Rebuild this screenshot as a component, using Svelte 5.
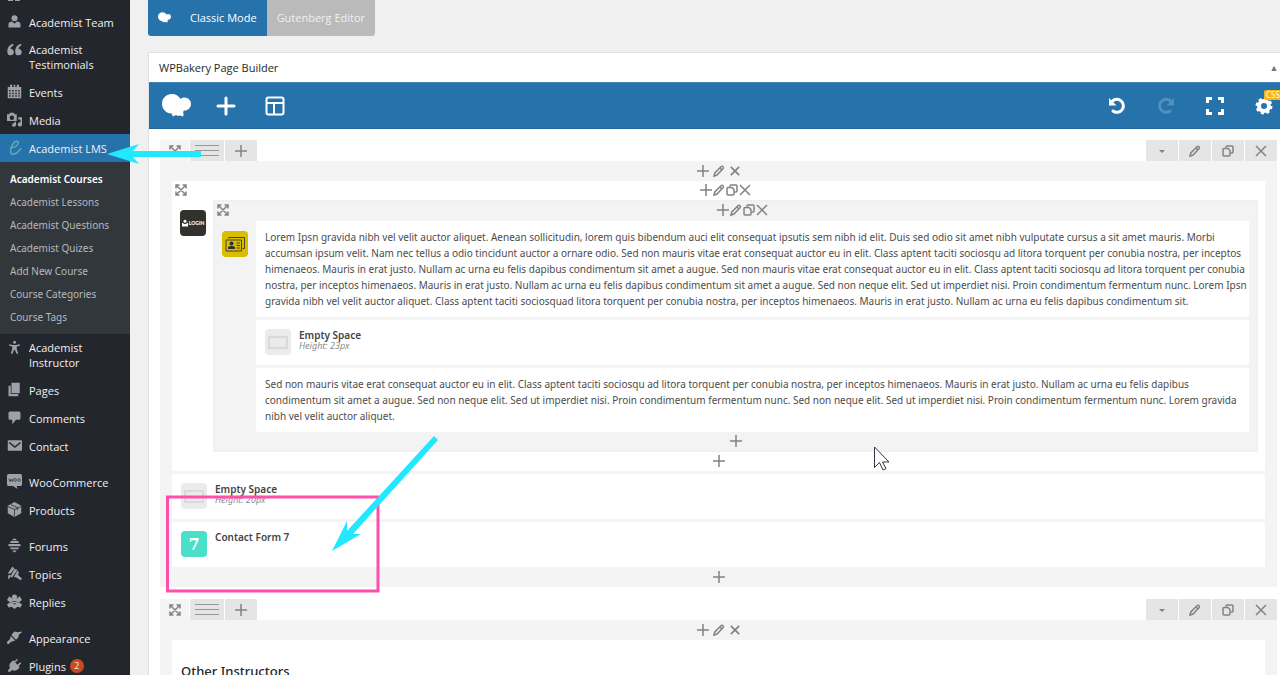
<script lang="ts">
	type Item = { label: string; icon: string; gap?: boolean; current?: boolean; count?: number };

	const before: Item[] = [
		{ label: 'Academist Team', icon: 'user' },
		{ label: 'Academist Testimonials', icon: 'quote' },
		{ label: 'Events', icon: 'calendar' },
		{ label: 'Media', icon: 'media' },
		{ label: 'Academist LMS', icon: 'lms', current: true }
	];

	const submenu = [
		'Academist Courses',
		'Academist Lessons',
		'Academist Questions',
		'Academist Quizes',
		'Add New Course',
		'Course Categories',
		'Course Tags'
	];

	const after: Item[] = [
		{ label: 'Academist Instructor', icon: 'person' },
		{ label: 'Pages', icon: 'pages' },
		{ label: 'Comments', icon: 'comment' },
		{ label: 'Contact', icon: 'mail' },
		{ label: 'WooCommerce', icon: 'woo', gap: true },
		{ label: 'Products', icon: 'box' },
		{ label: 'Forums', icon: 'hive', gap: true },
		{ label: 'Topics', icon: 'topics' },
		{ label: 'Replies', icon: 'bee' },
		{ label: 'Appearance', icon: 'brush', gap: true },
		{ label: 'Plugins', icon: 'plug', count: 2 }
	];

	const intro = [
		'Lorem Ipsn gravida nibh vel velit auctor aliquet. Aenean sollicitudin, lorem quis bibendum auci elit consequat ipsutis sem nibh id elit. Duis sed odio sit amet nibh vulputate cursus a sit amet mauris. Morbi',
		'accumsan ipsum velit. Nam nec tellus a odio tincidunt auctor a ornare odio. Sed non mauris vitae erat consequat auctor eu in elit. Class aptent taciti sociosqu ad litora torquent per conubia nostra, per inceptos',
		'himenaeos. Mauris in erat justo. Nullam ac urna eu felis dapibus condimentum sit amet a augue. Sed non mauris vitae erat consequat auctor eu in elit. Class aptent taciti sociosqu ad litora torquent per conubia',
		'nostra, per inceptos himenaeos. Mauris in erat justo. Nullam ac urna eu felis dapibus condimentum sit amet a augue. Sed non neque elit. Sed ut imperdiet nisi. Proin condimentum fermentum nunc. Lorem Ipsn',
		'gravida nibh vel velit auctor aliquet. Class aptent taciti sociosquad litora torquent per conubia nostra, per inceptos himenaeos. Mauris in erat justo. Nullam ac urna eu felis dapibus condimentum sit.'
	];

	const outro = [
		'Sed non mauris vitae erat consequat auctor eu in elit. Class aptent taciti sociosqu ad litora torquent per conubia nostra, per inceptos himenaeos. Mauris in erat justo. Nullam ac urna eu felis dapibus',
		'condimentum sit amet a augue. Sed non neque elit. Sed ut imperdiet nisi. Proin condimentum fermentum nunc. Sed non neque elit. Sed ut imperdiet nisi. Proin condimentum fermentum nunc. Lorem gravida',
		'nibh vel velit auctor aliquet.'
	];
</script>

{#snippet menuIcon(name: string)}
	<svg class="menu-icon" viewBox="0 0 20 20" aria-hidden="true">
		{#if name === 'user'}
			<circle cx="10" cy="5.5" r="4" />
			<path d="M2 18v-4c0-3 2-4 5-4l3 3 3-3c3 0 5 1 5 4v4z" />
		{:else if name === 'quote'}
			<path d="M9 13.200a4 4 0 1 1-8.500.300C0 8 3 3.500 8.500 2.300v2.500C6 6 5.200 7 5 9.300a4 4 0 0 1 4 3.900zM19.500 13.200a4 4 0 1 1-8.500.300C10.500 8 13.500 3.500 19 2.300v2.500c-2.500 1.200-3.300 2.200-3.500 4.500a4 4 0 0 1 4 3.900z" />
		{:else if name === 'calendar'}
			<path fill-rule="evenodd" d="M1 4h3V1h3v3h2V1h2v3h2V1h3v3h3v15H1zM3 8v2h2V8zm4 0v2h2V8zm4 0v2h2V8zm4 0v2h2V8zM3 11.500v2h2v-2zm4 0v2h2v-2zm4 0v2h2v-2zm4 0v2h2v-2zM3 15v2h2v-2zm4 0v2h2v-2zm4 0v2h2v-2zm4 0v2h2v-2z" />
		{:else if name === 'media'}
			<path fill-rule="evenodd" d="M0 3h3l1-2h5l1 2h3v9H0zm6.500 1.500a3 3 0 1 0 0 6 3 3 0 0 0 0-6zM15 7h5v9.500a2.800 2.800 0 1 1-2-2.600V10h-3zM12 13v4a2.600 2.600 0 1 1-2-2.300V13z" />
		{:else if name === 'lms'}
			<path class="lms" d="M4 10c5 1 12-3 11-7-1-3-6-1-8 4-3 6-3 12 1 12s7-3 11-8" />
		{:else if name === 'person'}
			<circle cx="10" cy="3" r="2" />
			<path d="M3 5.500l5 1h4l5-1v2l-4 1.200v3.300l2 6-2 .6-2.600-5.600h-.8L7 18.600 5 18l2-6V8.700L3 7.500z" />
		{:else if name === 'pages'}
			<path d="M6 1h11v14H6zM2 5h3v11h10v3H2z" />
		{:else if name === 'comment'}
			<path d="M4 2h12a2 2 0 0 1 2 2v7a2 2 0 0 1-2 2h-4l-5 6v-6H4a2 2 0 0 1-2-2V4c0-1 1-2 2-2z" />
		{:else if name === 'mail'}
			<rect x="1" y="3" width="19" height="14" rx="1" />
			<path class="cut" d="M3 6l7.500 6L18 6" />
		{:else if name === 'woo'}
			<path d="M2 0h16q2 0 2 2v12q0 2-2 2h-5l1 4-6-4H2q-2 0-2-2V2q0-2 2-2z" />
			<path class="cut thin" d="M2.500 6L4 10l1.500-3L7 10l1.500-4M12.500 8a1.500 2 0 1 0 0 .1zM17.500 8a1.500 2 0 1 0 0 .1z" />
		{:else if name === 'box'}
			<path d="M10 0l9 5v10l-9 5-9-5V5z" />
			<path class="cut thin" d="M1 6l9 4 9-4M10 10v9M5 3.500l9 4V11" />
		{:else if name === 'hive'}
			<path d="M8 1h4l1 2H7zM5 4h10l1 2.500H4zM2 8h16v3H2zM4 12.500h12L15 15H5zM7 16.500h6L11 19H9z" />
		{:else if name === 'topics'}
			<path d="M7 1l3 2-5 7H1zM10 4l4 1-7 10H4zM14 6l2 3-4 6h-3zM2 12h3l-2 5H1zM14 11l6 6-2 2-6-4z" />
		{:else if name === 'bee'}
			<circle cx="10" cy="4" r="3.5" />
			<path d="M8 6L3 3 0 8l4 3-4 3 2 4 4-1 4 3 4-3 4 1 2-4-4-3 4-3-3-5-5 3z" />
			<path class="cut thin" d="M8 10h4M8 13h4M4 3l3 3M16 3l-3 3M5 12l2-2M15 12l-2-2" />
		{:else if name === 'brush'}
			<path d="M7 5l3-3 4 1 5-1 1 1-4 3-1 4-3 3-6-6zM5 8l6 6-3 1-3 1-3 3-2-1v-2l4-4z" />
		{:else if name === 'plug'}
			<path d="M13 1l1.500 1.500L11 6l3 3 3.500-3.500L19 7l-3.500 4 1.500 1c-3 5-7 6-10 4l-4 3-2-2 3-4C2 9 4 6 9 3l1 1.500z" />
		{/if}
	</svg>
{/snippet}

{#snippet glyph(name: string)}
	<svg class="glyph" viewBox="0 0 12 12" aria-hidden="true">
		{#if name === 'plus'}
			<path d="M6 0v12M0 6h12" />
		{:else if name === 'pencil'}
			<path d="M1 11l.8-3L8 1.800q1-1 2 0t0 2L4 10zM7 3l2 2" />
		{:else if name === 'copy'}
			<path d="M4 2.500V2q0-1 1-1h5q1 0 1 1v5q0 1-1 1H9M2 3.500h4l2 2V10q0 1-1 1H2q-1 0-1-1V4.500q0-1 1-1z" />
		{:else if name === 'close'}
			<path d="M1 1l10 10M11 1L1 11" />
		{:else if name === 'caret'}
			<path class="solid" d="M3 5h6L6 8z" />
		{:else if name === 'expand'}
			<path d="M2 2l8 8M10 2l-8 8M1 4.500V1h3.500M7.500 1H11v3.500M11 7.500V11H7.500M4.500 11H1V7.500" />
		{/if}
	</svg>
{/snippet}

{#snippet cloud()}
	<svg class="cloud" viewBox="0 0 29 23" aria-hidden="true">
		<path d="M10 0c4 0 7 2 8.500 5 1-1 2.500-1.500 4-1.500 4 0 6.500 3 6.500 6.500s-3 7-7 6.500c-1 1-1 2.500-.3 4L21 22.500l-3-1-2 .5-2-1-3 1.500-1.500-3C4 19.500 0 15 0 9.800 0 4 4.500 0 10 0z" />
	</svg>
{/snippet}

{#snippet rowTabs()}
	<div class="row-tabs">
		<button class="tab pale" aria-label="Toggle row">{@render glyph('expand')}</button>
		<button class="tab wide" aria-label="Row layout">
			<svg class="bars" viewBox="0 0 24 11"><path d="M0 .5h24M0 5.500h24M0 10.500h24" /></svg>
		</button>
		<button class="tab" aria-label="Add column">{@render glyph('plus')}</button>
		<span class="spacer"></span>
		<button class="tab" aria-label="Row menu">{@render glyph('caret')}</button>
		<button class="tab" aria-label="Edit row">{@render glyph('pencil')}</button>
		<button class="tab" aria-label="Clone row">{@render glyph('copy')}</button>
		<button class="tab" aria-label="Delete row">{@render glyph('close')}</button>
	</div>
{/snippet}

{#snippet columnControls()}
	<div class="controls">
		<button aria-label="Add">{@render glyph('plus')}</button>
		<button aria-label="Edit">{@render glyph('pencil')}</button>
		<button class="small" aria-label="Delete">{@render glyph('close')}</button>
	</div>
{/snippet}

{#snippet innerControls()}
	<div class="controls tight">
		<button class="toggle" aria-label="Toggle">{@render glyph('expand')}</button>
		<span class="group">
			<button aria-label="Add">{@render glyph('plus')}</button>
			<button aria-label="Edit">{@render glyph('pencil')}</button>
			<button aria-label="Clone">{@render glyph('copy')}</button>
			<button aria-label="Delete">{@render glyph('close')}</button>
		</span>
	</div>
{/snippet}

{#snippet emptySpace(height: string)}
	<div class="element">
		<span class="badge empty"></span>
		<div>
			<h4>Empty Space</h4>
			<p class="meta">Height: {height}</p>
		</div>
	</div>
{/snippet}

{#snippet menuItem(item: Item)}
	<li class:gap={item.gap}>
		<a href="#menu" class="item" class:current={item.current}>
			{@render menuIcon(item.icon)}
			<span class="label">{item.label}</span>
			{#if item.count}<span class="count">{item.count}</span>{/if}
		</a>
	</li>
{/snippet}

<div class="shell">
	<nav class="sidebar" aria-label="Main menu">
		<ul>
			<li class="tail"><i></i><i></i></li>
			{#each before as item}
				{@render menuItem(item)}
			{/each}
			<li>
				<ul class="submenu">
					{#each submenu as label, i}
						<li><a href="#submenu" class:active={i === 0}>{label}</a></li>
					{/each}
				</ul>
			</li>
			{#each after as item}
				{@render menuItem(item)}
			{/each}
		</ul>
	</nav>

	<main>
		<div class="modes">
			<button class="classic">{@render cloud()}Classic Mode</button>
			<button class="gutenberg">Gutenberg Editor</button>
		</div>

		<section class="postbox">
			<header>
				<h2>WPBakery Page Builder</h2>
				<button class="fold" aria-label="Toggle panel">▲</button>
			</header>

			<div class="toolbar">
				<button aria-label="WPBakery">{@render cloud()}</button>
				<button aria-label="Add element">
					<svg viewBox="0 0 20 20"><path class="line" d="M10 2v16M2 10h16" /></svg>
				</button>
				<button aria-label="Templates">
					<svg viewBox="0 0 20 20"><path class="line slim" d="M3.500 1.500h13q2 0 2 2v13q0 2-2 2h-13q-2 0-2-2v-13q0-2 2-2zM2 7h16M9 7v11" /></svg>
				</button>
				<span class="spacer"></span>
				<button aria-label="Undo">
					<svg viewBox="0 0 20 20"><path class="line" d="M5 5.500a6.500 6.500 0 1 1 1 9.500" /><path d="M2 2v7.500h7.500z" /></svg>
				</button>
				<button aria-label="Redo" class="faded">
					<svg viewBox="0 0 20 20"><path class="line" d="M15 5.500a6.500 6.500 0 1 0-1 9.500" /><path d="M18 2v7.500h-7.500z" /></svg>
				</button>
				<button aria-label="Full screen">
					<svg viewBox="0 0 20 20"><path class="line square" d="M2.500 7V2.500H7M13 2.500h4.500V7M17.500 13v4.500H13M7 17.500H2.500V13" /></svg>
				</button>
				<button aria-label="Settings" class="settings">
					<svg viewBox="0 0 20 20">
						<circle class="teeth" cx="10" cy="10" r="7" />
						<circle class="line thick" cx="10" cy="10" r="5" />
					</svg>
					<span class="css">CSS</span>
				</button>
			</div>

			<div class="canvas">
				<div class="row">
					{@render rowTabs()}
					<div class="row-body">
						{@render columnControls()}
						<div class="stack">
							<div class="nest">
								{@render innerControls()}
								<div class="nest-body">
									<span class="badge login">
										<svg viewBox="0 0 8 9" aria-hidden="true"><circle cx="4" cy="2" r="2" /><path d="M0 4l4 2 4-2v5H0z" /></svg>
										LOGIN
									</span>
									<div class="inner">
										{@render innerControls()}
										<div class="nest-body">
											<span class="badge card">
												<svg viewBox="0 0 20 16" aria-hidden="true">
													<path d="M3.500 2.500v-1h16v11h-2M1 4h15.500v11H1z" />
													<path class="dark" d="M3 13v-2l2-1h3l2 1v2z" />
													<circle class="dark" cx="6.500" cy="7.500" r="2" />
													<path d="M11.500 7H15M11.500 9.500H15M11.500 12H15" />
												</svg>
											</span>
											<div class="stack">
												<div class="element text">
													<p>{#each intro as line}<span>{line} </span>{/each}</p>
												</div>
												{@render emptySpace('23px')}
												<div class="element text">
													<p>{#each outro as line}<span>{line} </span>{/each}</p>
												</div>
											</div>
										</div>
										<button class="add" aria-label="Add to inner column">{@render glyph('plus')}</button>
									</div>
								</div>
								<button class="add" aria-label="Add to inner row">{@render glyph('plus')}</button>
							</div>
							{@render emptySpace('20px')}
							<div class="element">
								<span class="badge form">7</span>
								<h4>Contact Form 7</h4>
							</div>
						</div>
						<button class="add column" aria-label="Add to column">{@render glyph('plus')}</button>
					</div>
				</div>

				<div class="row">
					{@render rowTabs()}
					<div class="row-body">
						{@render columnControls()}
						<div class="stack">
							<div class="element heading">
								<h3>Other Instructors</h3>
							</div>
						</div>
					</div>
				</div>
			</div>
		</section>
	</main>

	<!-- tutorial marks and pointer, drawn over the page -->
	<svg class="marks" aria-hidden="true">
		<rect x="167.500" y="497" width="210.500" height="94" />
		<path class="cyan" d="M107 154l32-10-6 7h68v6h-68l6 7z" />
		<path class="cyan" d="M332 551l15-30v10l87-95 4 4-85 94 8 0z" />
		<path class="pointer" d="M874.500 447v20.500l5-5 3.500 7.500 3-1.500-3.500-6.500h6.500z" />
	</svg>
</div>

<style>
	:global(body) {
		margin: 0;
	}

	.shell {
		position: relative;
		display: flex;
		height: 100vh;
		overflow: hidden;
		background: #f0f0f1;
		font-family: 'Noto Sans', 'Open Sans', sans-serif;
		font-size: 10px;
		color: #4c4c4c;
	}
	ul {
		list-style: none;
		margin: 0;
		padding: 0;
	}
	button {
		display: flex;
		align-items: center;
		justify-content: center;
		margin: 0;
		padding: 0;
		border: 0;
		background: none;
		color: inherit;
		font: inherit;
	}
	h2, h3, h4, p {
		margin: 0;
	}
	.spacer {
		flex: 1;
	}

	/* sidebar */
	.sidebar {
		width: 130px;
		flex-shrink: 0;
		background: #23262d;
	}
	.tail {
		display: flex;
		gap: 2px;
		height: 8px;
		padding-left: 8px;
	}
	.tail i {
		width: 5px;
		height: 1px;
		background: #9ca2a7;
	}
	.item {
		display: flex;
		align-items: center;
		gap: 7px;
		min-height: 28px;
		box-sizing: border-box;
		padding: 6px 8px 6px 7px;
		font-family: 'Open Sans', 'Noto Sans', sans-serif;
		font-size: 11px;
		line-height: 15px;
		font-weight: 500;
		color: #f0f0f1;
		text-decoration: none;
	}
	.label {
		max-width: 90px;
	}
	.gap {
		padding-top: 8px;
	}
	.current {
		background: #2673ac;
	}
	.menu-icon {
		width: 15px;
		height: 15px;
		flex-shrink: 0;
		align-self: flex-start;
		fill: #9ca2a7;
	}
	.cut {
		fill: none;
		stroke: #23262d;
		stroke-width: 2;
	}
	.thin {
		stroke-width: 1;
	}
	.lms {
		fill: none;
		stroke: #5fa9b4;
		stroke-width: 2;
	}
	.count {
		width: 14px;
		height: 14px;
		margin-left: -3px;
		border-radius: 50%;
		background: #ca4a1f;
		font-size: 9px;
		line-height: 14px;
		text-align: center;
	}
	.submenu {
		padding: 6px 0 5px;
		background: #32373c;
	}
	.submenu a {
		display: block;
		padding-left: 10px;
		line-height: 23px;
		color: #b4b9be;
		text-decoration: none;
		white-space: nowrap;
	}
	.submenu .active {
		font-weight: 600;
		color: #fff;
	}

	/* editor */
	main {
		flex: 1;
		min-width: 0;
		padding-left: 18px;
	}
	.modes {
		display: flex;
		height: 36px;
		font-family: 'Open Sans', 'Noto Sans', sans-serif;
		font-size: 11px;
		font-weight: 500;
		color: #fff;
	}
	.modes button {
		padding: 0 10px 1px;
	}
	.classic {
		gap: 19px;
		border-radius: 0 0 0 3px;
		background: #2673ac;
	}
	.classic .cloud {
		width: 13px;
		height: 11px;
	}
	.gutenberg {
		border-radius: 0 0 3px;
		background: #bababa;
		color: #f0f0f0;
	}
	.cloud {
		width: 29px;
		height: 23px;
		fill: #fff;
	}
	.postbox {
		margin-top: 16px;
		border: solid #e0e0e2;
		border-width: 1px 0 0 1px;
		background: #fff;
	}
	.postbox header {
		display: flex;
		align-items: center;
		justify-content: space-between;
		height: 29px;
		padding-left: 10px;
	}
	h2 {
		font-family: 'Open Sans', 'Noto Sans', sans-serif;
		font-size: 11px;
		font-weight: 500;
		color: #23282d;
	}
	.fold {
		width: 12px;
		font-size: 9px;
		color: #72777c;
	}
	.toolbar {
		display: flex;
		align-items: center;
		height: 45px;
		padding-left: 3px;
		border-top: 1px solid #3f85b8;
		border-bottom: 1px solid #1e659c;
		background: #2673ac;
	}
	.toolbar button {
		width: 49px;
		height: 45px;
	}
	.toolbar svg:not(.cloud) {
		width: 20px;
		height: 20px;
		fill: #fff;
	}
	.toolbar .line {
		fill: none;
		stroke: #fff;
		stroke-width: 3;
		stroke-linecap: round;
	}
	.toolbar .slim {
		stroke-width: 2;
	}
	.toolbar .square {
		stroke-linecap: butt;
	}
	.toolbar .thick {
		stroke-width: 4;
	}
	.toolbar .teeth {
		fill: none;
		stroke: #fff;
		stroke-width: 3;
		stroke-dasharray: 3 2.500;
	}
	.toolbar .faded {
		opacity: 0.2;
	}
	.toolbar .settings {
		position: relative;
		width: 41px;
		padding-left: 8px;
	}
	.css {
		position: absolute;
		top: 7px;
		left: 25px;
		padding: 0 2px;
		border-radius: 2px;
		background: #fbb510;
		font-size: 8px;
		line-height: 10px;
		color: #fff;
	}
	.canvas {
		display: flex;
		flex-direction: column;
		gap: 12px;
		padding: 11px 3px 0 11px;
	}
	.row-tabs {
		display: flex;
		gap: 1px;
		height: 21px;
	}
	.tab {
		width: 32px;
		border-radius: 1px 1px 0 0;
		background: #e5e5e5;
	}
	.tab.pale {
		width: 29px;
		background: #f4f4f4;
	}
	.tab.wide {
		width: 34px;
	}
	.bars {
		width: 24px;
		height: 11px;
		stroke: #989898;
	}
	.glyph {
		width: 12px;
		height: 12px;
		fill: none;
		stroke: #828282;
		stroke-width: 1.500;
		overflow: visible;
	}
	.solid {
		fill: #828282;
		stroke: none;
	}
	.row-body {
		padding: 0 12px;
		background: #f4f4f4;
	}
	.controls {
		display: flex;
		align-items: center;
		justify-content: center;
		height: 20px;
	}
	.controls button {
		width: 16px;
		height: 20px;
	}
	.small .glyph {
		width: 10px;
		height: 10px;
		stroke-width: 2;
	}
	.tight {
		height: 18px;
		padding: 0 2px 1px;
	}
	.tight button {
		width: 13px;
		height: 18px;
	}
	.group {
		display: flex;
		flex: 1;
		justify-content: center;
	}
	.add {
		width: 100%;
		height: 19px;
		padding-bottom: 2px;
	}
	.add.column {
		height: 20px;
		padding-bottom: 0;
	}
	.stack {
		display: flex;
		flex: 1;
		flex-direction: column;
		gap: 3px;
		min-width: 0;
	}
	.nest {
		background: #fff;
	}
	.nest > .nest-body {
		padding: 0 7px 0 8px;
	}
	.nest-body {
		display: flex;
		gap: 7px;
	}
	.inner {
		flex: 1;
		min-width: 0;
		box-sizing: border-box;
		border: 1px dotted #ebebeb;
		background: #f3f3f3;
	}
	.inner .tight {
		padding-bottom: 2px;
	}
	.inner > .nest-body {
		gap: 8px;
		padding: 0 8px;
	}
	.nest-body > .badge {
		margin-top: 10px;
	}
	.badge {
		display: flex;
		align-items: center;
		justify-content: center;
		width: 26px;
		height: 26px;
		flex-shrink: 0;
		border-radius: 4px;
	}
	.login {
		gap: 1px;
		background: #32312c;
		font-family: Lato, sans-serif;
		font-size: 5px;
		font-weight: 900;
		color: #fff;
	}
	.login svg {
		width: 6px;
		height: 8px;
		fill: #fff;
	}
	.card {
		background: #d8bd00;
	}
	.card svg {
		width: 20px;
		height: 16px;
		fill: none;
		stroke: #4a4418;
	}
	.card .dark {
		fill: #32312c;
		stroke: none;
	}
	.empty {
		background: #ebebeb;
	}
	.empty::before {
		content: '';
		width: 16px;
		height: 9px;
		border: 2px solid #dadada;
	}
	.form {
		background: #4adfc9;
		font-family: 'DejaVu Serif', serif;
		font-size: 16px;
		font-weight: 700;
		color: #fff;
	}
	.element {
		display: flex;
		gap: 8px;
		min-height: 45px;
		box-sizing: border-box;
		padding: 9px;
		background: #fff;
	}
	.element.text {
		padding: 8px 9px;
	}
	.text p {
		line-height: 16px;
		white-space: nowrap;
	}
	.text span {
		display: block;
	}
	h4 {
		font-size: 10px;
		font-weight: 600;
		line-height: 12px;
		color: #444;
	}
	.meta {
		font-size: 9px;
		font-style: italic;
		line-height: 10px;
		color: #8c8c8c;
	}
	.element.heading {
		padding-top: 22px;
	}
	h3 {
		font-size: 13px;
		font-weight: 500;
		line-height: 18px;
		color: #23282d;
	}

	.marks {
		position: absolute;
		inset: 0;
		width: 100%;
		height: 100%;
		pointer-events: none;
	}
	.marks rect {
		fill: none;
		stroke: #ff4fac;
		stroke-width: 3;
	}
	.cyan {
		fill: #22e8ff;
	}
	.pointer {
		fill: #fff;
		stroke: #34324a;
	}
</style>
